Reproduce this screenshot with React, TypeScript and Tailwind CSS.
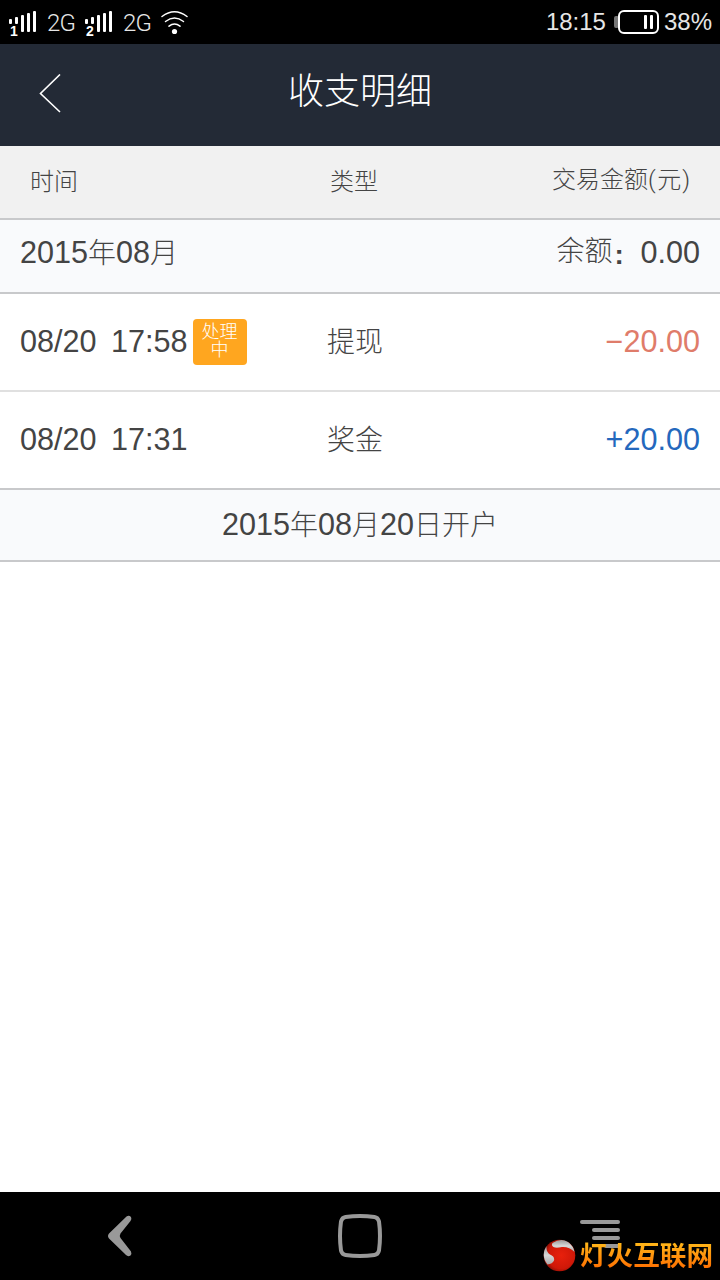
import clsx from 'clsx';

const records = [
  { date: '08/20', time: '17:58', pending: true, type: '提现', amount: '20.00', income: false },
  { date: '08/20', time: '17:31', pending: false, type: '奖金', amount: '20.00', income: true },
];

// Latin digits are set slightly larger than the Chinese characters
function Mixed({ text }: { text: string }) {
  return (
    <>
      {text.split(/([0-9./]+)/).filter(Boolean).map((part, i) => (
        <span key={i} className={/^[0-9./]/.test(part) ? 'text-[30.6px]' : 'text-[28px] font-light'}>
          {part}
        </span>
      ))}
    </>
  );
}

function Signal({ sim }: { sim: string }) {
  return (
    <div className="relative h-8 w-[38px]">
      <svg className="mt-[4px]" width="28" height="24" viewBox="0 0 28 24" fill="#fff">
        <rect x="0" y="9" width="3" height="5" rx="1" />
        <rect x="6" y="7" width="3" height="7" rx="1" />
        <rect x="12" y="5" width="3" height="17" rx="1" />
        <rect x="18" y="3" width="3" height="19" rx="1" />
        <rect x="24" y="1" width="3" height="21" rx="1" />
      </svg>
      <span className="absolute top-[17px] left-px text-[14px] leading-4 font-bold text-white">{sim}</span>
    </div>
  );
}

function StatusBar() {
  return (
    <div className="flex h-11 items-center bg-black pl-[9px] pr-2 text-2xl text-[#e6e6e6]">
      <Signal sim="1" />
      <span className="w-[38px] pt-px font-['Roboto'] font-light tracking-[-0.8px]">2G</span>
      <Signal sim="2" />
      <span className="w-[37px] pt-px font-['Roboto'] font-light tracking-[-0.8px]">2G</span>
      <svg width="30" height="26" viewBox="0 0 30 26" fill="none" stroke="#fff" strokeWidth="1.5" strokeLinecap="round">
        <path d="M2 7.500 Q14.500 -2 27 7.500" />
        <path d="M5.500 12.500 Q14.500 5.500 23.500 12.500" />
        <path d="M9 17.200 Q14.500 13 20 17.200" />
        <circle cx="14.500" cy="22.500" r="2.600" fill="#fff" stroke="none" />
      </svg>
      <span className="ml-auto">18:15</span>
      <svg className="ml-2" width="46" height="26" viewBox="0 0 46 26">
        <rect x="0" y="7" width="5" height="12" rx="2" fill="#777" />
        <rect x="5" y="2" width="39" height="22" rx="5" fill="#000" stroke="#fff" strokeWidth="2" />
        <rect x="30" y="6" width="3" height="14" rx="1" fill="#fff" />
        <rect x="36" y="6" width="3" height="14" rx="1" fill="#fff" />
      </svg>
      <span className="ml-1">38%</span>
    </div>
  );
}

function NavBar() {
  return (
    <div className="relative flex h-[88px] items-center justify-between bg-black pr-[100px] pl-[100px]">
      <svg width="44" height="48" viewBox="0 0 44 48" fill="#999">
        <path d="M26.500 4.500 Q29 3 31 5 Q32 7 30.500 9 L20.500 21.500 Q19 24 20.500 26 L31 39.500 Q32 42 30.500 43.500 Q28 45 26 43 L9 26.500 Q7 24 9 21.500 Z" />
      </svg>
      <svg className="mr-1" width="48" height="48" viewBox="0 0 48 48" fill="none" stroke="#999" strokeWidth="4">
        <path d="M9.500 5 Q24 3 38.500 5 Q42 5.500 43 9.500 Q45 24 43 38.500 Q42 42.500 38.500 43 Q24 45 9.500 43 Q6 42.500 5 38.500 Q3 24 5 9.500 Q6 5.500 9.500 5 Z" />
      </svg>
      <svg width="40" height="48" viewBox="0 0 40 48" fill="#999">
        <rect x="0" y="8" width="40" height="4" rx="2" />
        <rect x="12" y="16" width="28" height="4" rx="2" />
        <rect x="12" y="24" width="28" height="4" rx="2" />
        <rect x="24" y="32" width="16" height="4" rx="2" />
      </svg>
      {/* Watermark */}
      <div className="absolute right-[7px] bottom-[7px] flex items-center gap-1">
        <svg width="33" height="33" viewBox="0 0 33 33">
          <defs>
            <radialGradient id="ball" cx="0.55" cy="0.5" r="0.6">
              <stop offset="0" stopColor="#e8200c" />
              <stop offset="0.700" stopColor="#cf1808" />
              <stop offset="1" stopColor="#750b04" />
            </radialGradient>
            <linearGradient id="silver" x1="0" y1="0" x2="0" y2="1">
              <stop offset="0" stopColor="#999" />
              <stop offset="0.500" stopColor="#d8d8d8" />
              <stop offset="1" stopColor="#aaa" />
            </linearGradient>
          </defs>
          <circle cx="16.500" cy="16.500" r="15.800" fill="url(#ball)" />
          <path d="M9.500 4 Q18 -1.500 25 3 Q30.500 7 31.500 13 Q26 7.500 19 8 Q13 9.500 10.500 8 Q8 6.500 9.500 4 Z" fill="url(#silver)" />
          <path d="M3.500 7 Q3 13 7 15.500 Q12 17.500 11 21.500 Q9.500 25 4.500 25.500 Q-1 19 1.500 11 Z" fill="url(#silver)" />
        </svg>
        <span className="mb-[3px] bg-gradient-to-b from-[#ffc21c] to-[#ff6a00] bg-clip-text font-['Noto_Sans_CJK_SC'] text-[26.6px] leading-8 font-bold text-transparent">
          灯火互联网
        </span>
      </div>
    </div>
  );
}

export default function App() {
  return (
    <div className="flex h-[1280px] w-[720px] flex-col bg-white font-['Liberation_Sans','Noto_Sans_CJK_SC',sans-serif] text-[#444]">
      <StatusBar />

      {/* Header */}
      <header className="grid h-[102px] grid-cols-[1fr_auto_1fr] items-center bg-[#232a36] text-white">
        <svg className="ml-[38px]" width="26" height="42" viewBox="0 0 26 42" fill="none" stroke="#fff" strokeWidth="1.600">
          <path d="M22 0.500 L2.500 19.500 L22 38" />
        </svg>
        <h1 className="pb-1.5 text-4xl font-light">收支明细</h1>
      </header>

      {/* Column titles */}
      <div className="flex h-[74px] border-b-2 border-[#c8c9cb] bg-[#f1f1f1] pr-[30px] pl-[30px] text-2xl leading-[72px] font-light">
        <span className="w-[300px]">时间</span>
        <span>类型</span>
        <span className="ml-auto leading-[68px]">
          交易金额<span className="font-['Roboto'] tracking-[1.4px]">(</span>元<span className="pl-px font-['Roboto']">)</span>
        </span>
      </div>

      {/* Month summary */}
      <div className="flex h-[74px] justify-between border-b-2 border-[#c8c9cb] bg-[#f9fafc] px-5 leading-[64px]">
        <span><Mixed text="2015年08月" /></span>
        <span className="flex">
          <span className="text-[28px] leading-[63px] font-light">余额</span>
          <span className="w-7 pt-[3px] pl-0.5 text-[28px] font-bold">:</span>
          <span className="text-[30.6px]">0.00</span>
        </span>
      </div>

      {records.map((r, i) => (
        <div
          key={r.time}
          className={clsx(
            'flex h-[98px] items-center border-b-2 px-5',
            i === records.length - 1 ? 'border-[#c8c9cb]' : 'border-[#e0e0e0]'
          )}
        >
          <div className="flex w-[307px] items-center text-[30.6px]">
            <span className="w-[91px]">{r.date}</span>
            <span>{r.time}</span>
            {r.pending && (
              <span className="ml-[5px] h-[46px] w-[54px] rounded bg-[#ffa61f] px-2 pt-1 text-center text-lg leading-[18px] font-light text-white">
                处理中
              </span>
            )}
          </div>
          <span className="pt-0.5 text-[28px] font-light">{r.type}</span>
          <span className={clsx('ml-auto text-[30.6px]', r.income ? 'text-[#2468bd]' : 'text-[#df7c6a]')}>
            {r.income ? '+' : '−'}{r.amount}
          </span>
        </div>
      ))}

      <div className="h-[72px] border-b-2 border-[#c8c9cb] bg-[#f9fafc] text-center leading-[68px]">
        <Mixed text="2015年08月20日开户" />
      </div>

      <div className="flex-1" />
      <NavBar />
    </div>
  );
}
